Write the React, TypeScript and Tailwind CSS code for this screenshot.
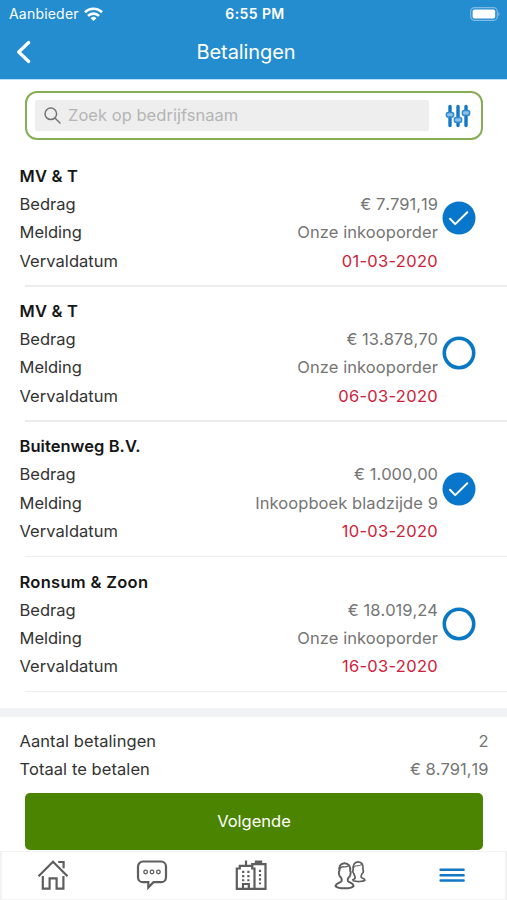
import React from "react";

type Payment = { name: string; amount: string; note: string; due: string; selected: boolean; nameSpacing: string };

const payments: Payment[] = [
  { name: "MV & T", amount: "€ 7.791,19", note: "Onze inkooporder", due: "01-03-2020", selected: true, nameSpacing: "tracking-[0.2px]" },
  { name: "MV & T", amount: "€ 13.878,70", note: "Onze inkooporder", due: "06-03-2020", selected: false, nameSpacing: "tracking-[0.2px]" },
  { name: "Buitenweg B.V.", amount: "€ 1.000,00", note: "Inkoopboek bladzijde 9", due: "10-03-2020", selected: true, nameSpacing: "tracking-[0.05px]" },
  { name: "Ronsum & Zoon", amount: "€ 18.019,24", note: "Onze inkooporder", due: "16-03-2020", selected: false, nameSpacing: "tracking-[0.3px]" },
];

function WifiIcon() {
  return (
    <svg className="h-[15px] w-[19px]" viewBox="0 0 19 15" fill="none" stroke="#fff" strokeWidth="2.7">
      <path d="M1 5.300a12 12 0 0 1 17 0" />
      <path d="M4 8.900a7.800 7.800 0 0 1 11 0" />
      <path d="M9.500 14 6.600 11.200a4.100 4.100 0 0 1 5.800 0Z" fill="#fff" stroke="none" />
    </svg>
  );
}

function BatteryIcon() {
  return (
    <svg className="h-[14px] w-[31px]" viewBox="0 0 31 14" fill="none">
      <rect x="0.7" y="0.7" width="26.600" height="12.600" rx="3.800" stroke="#7fbbe4" strokeWidth="1.200" />
      <rect x="2.600" y="2.600" width="22.600" height="8.800" rx="2" fill="#fff" />
      <path d="M28.400 5c1.600.5 1.600 3.500 0 4Z" fill="#7fbbe4" />
    </svg>
  );
}

function FilterIcon() {
  return (
    <svg className="h-6 w-[26px]" viewBox="0 0 26 24" fill="none" stroke="#1277c4">
      <path d="M5 2.500v19M13 2.500v19M21 2.500v19" strokeWidth="3.400" strokeLinecap="round" />
      <g fill="#8fc2e8" stroke="#2f8bd0" strokeWidth="1.500">
        <rect x="1.400" y="8.400" width="7.200" height="4.600" rx="1.800" />
        <rect x="9.400" y="13.600" width="7.200" height="4.600" rx="1.800" />
        <rect x="17.400" y="6.600" width="7.200" height="4.600" rx="1.800" />
      </g>
    </svg>
  );
}

function SelectMark({ selected }: { selected: boolean }) {
  return (
    <svg className="h-[34px] w-[34px]" viewBox="0 0 34 34" fill="none">
      {selected ? (
        <>
          <circle cx="17" cy="17" r="16.500" fill="#0877cb" />
          <path d="m8 17.800 5.200 5.300L25.300 11.300" stroke="#fff" strokeWidth="2" strokeLinecap="round" strokeLinejoin="round" />
        </>
      ) : (
        <circle cx="17" cy="17" r="14.700" stroke="#0877c4" strokeWidth="3.600" />
      )}
    </svg>
  );
}

function PaymentRow({ item }: { item: Payment }) {
  return (
    <li className="h-[135.2px] pt-[10.6px]">
      <div className="flex h-[124.6px] flex-col">
        <h2 className={`ml-[19.5px] text-[16.5px] font-semibold leading-[28px] text-[#161616] ${item.nameSpacing}`}>{item.name}</h2>
        <div className="flex pl-[19.5px]">
          <dl className="w-[418.5px] text-[16.5px] leading-[28.2px] text-[#333]">
            <div className="flex justify-between">
              <dt>Bedrag</dt>
              <dd className="text-[#757575] [font-kerning:none]">{item.amount}</dd>
            </div>
            <div className="flex justify-between">
              <dt>Melding</dt>
              <dd className="tracking-[0.07px] text-[#757575]">{item.note}</dd>
            </div>
            <div className="flex justify-between">
              <dt className="tracking-[0.05px]">Vervaldatum</dt>
              <dd className="tracking-[0.3px] text-[#d0213a]">{item.due}</dd>
            </div>
          </dl>
          <div className="ml-1 mt-[11.2px]">
            <SelectMark selected={item.selected} />
          </div>
        </div>
        <div className="ml-[25px] mt-auto h-[1.5px] bg-[#ececec]" />
      </div>
    </li>
  );
}

function HomeIcon() {
  return (
    <svg className="h-8 w-8" viewBox="0 0 32 32" fill="none" stroke="#5e5e5e" strokeWidth="2.200">
      <path d="M1.500 17.200 16 2.800l14.500 14.400" />
      <path d="M21.200 3H26.600V9.200" />
      <path d="M5.800 17v12.600h6.800V19.400h7v10.200h6.800V17" />
    </svg>
  );
}

function ChatIcon() {
  return (
    <svg className="h-8 w-8" viewBox="0 0 32 32" fill="none" stroke="#5e5e5e" strokeWidth="2.200">
      <path d="M7 2.500h18a5 5 0 0 1 5 5v10.700a5 5 0 0 1-5 5h-7.500l-5.200 5.300v-5.300H7a5 5 0 0 1-5-5V7.500a5 5 0 0 1 5-5Z" />
      <g strokeWidth="1.300">
        <circle cx="9.600" cy="13" r="1.800" />
        <circle cx="16" cy="13" r="1.800" />
        <circle cx="22.400" cy="13" r="1.800" />
      </g>
    </svg>
  );
}

function BuildingsIcon() {
  return (
    <svg className="h-8 w-8" viewBox="0 0 32 32" fill="none" stroke="#5e5e5e" strokeWidth="2.200">
      <path d="M1.800 29.800V9.500h3V6.800h12.400v2.700h2.300V29.800Z" />
      <path d="M11 6.500V1.500M17.200 7.500V5.200h13.300v24.600H19.500" />
      <path d="M19.800 3h7.400" strokeWidth="3" />
      <path d="M8 29.800v-4.800h5.800v4.800" />
      <path d="M8.200 11.800v10.500M13.400 11.800v10.500M25 10.800v14.500" strokeWidth="2.200" strokeDasharray="2.200 2" />
    </svg>
  );
}

function PeopleIcon() {
  return (
    <svg className="h-8 w-8" viewBox="0 0 32 32" fill="none" stroke="#5e5e5e" strokeLinejoin="round" strokeLinecap="round">
      <path
        strokeWidth="1.900"
        d="M1.500 27.200c.3-2.700 2.700-3.300 5-4.200 1.900-.7 1.500-2.700.3-4.800-.9-.3-1.500-1.200-1.600-2.600l-.4-2.200c0-.6.200-1 .6-1.200C4.800 7.200 6.500 4.200 10.500 4.200s6.300 3 5.700 8c.4.200.6.600.5 1.200l-.3 2.200c-.2 1.400-.8 2.300-1.700 2.600-1.200 2.100-1.600 4.100.3 4.800 2.300.9 4.300 1.500 4.600 4.200-3 2.800-15 2.800-18.100 0Z"
      />
      <path strokeWidth="1.300" d="M5.800 10.300c.8-2.300 2-2.700 3.700-2.500 2.200.3 3.900-.2 5-1" />
      <path
        strokeWidth="1.700"
        d="M18.800 20.800c2-.7 3-1.400 2-3.800-.4-.6-.8-1.300-.8-2.200-.9-.4-1.200-1.300-1.200-2.800 0-.5.100-.8.400-.9-.5-5 1-8.300 4.900-8.300s5.400 3.100 4.900 8.300c.4.200.5.500.4 1-.1 1.500-.6 2.400-1.400 2.700-.7 1.700-1.700 3.600.2 4.200 1.500.4 2.500 1.100 2.700 2.200-2.200 1.600-8 1.700-11.600.6"
      />
      <path strokeWidth="1.100" d="M20 8.300c1-1.800 2-1.700 3.500-1.600 1.600.1 3-.3 3.800-1" />
    </svg>
  );
}

function MenuIcon() {
  return (
    <svg className="h-8 w-8" viewBox="0 0 32 32" stroke="#1277c4" strokeWidth="2.500" strokeLinecap="round">
      <path d="M4.600 10.800h23M4.600 16.200h23M4.600 21.600h23" />
    </svg>
  );
}

export default function App() {
  return (
    <div className="flex h-[900px] w-[507px] flex-col overflow-hidden bg-white font-['Inter','Liberation_Sans',sans-serif] antialiased">
      <header className="h-20 shrink-0 border-b border-[#b5e2fa] bg-[#248dd0] text-white">
        <div className="grid h-7 grid-cols-3 items-center pl-[9px] pr-[6px]">
          <div className="flex items-center gap-[5px]">
            <span className="text-[14px] leading-5 tracking-[0.2px]">Aanbieder</span>
            <WifiIcon />
          </div>
          <span className="text-center text-[14px] font-semibold leading-5 tracking-[0.4px]">6:55 PM</span>
          <div className="flex justify-end">
            <BatteryIcon />
          </div>
        </div>
        <div className="grid h-12 grid-cols-[60px_1fr_75px] items-center">
          <svg className="ml-4 h-6 w-4" viewBox="0 0 16 24" fill="none" stroke="#fff" strokeWidth="3.200" strokeLinecap="round" strokeLinejoin="round">
            <path d="M12.700 2.500 2.700 12l10 9.500" />
          </svg>
          <h1 className="text-center text-[20px] leading-7 tracking-[-0.1px]">Betalingen</h1>
        </div>
      </header>

      <div className="ml-[25px] mt-[11px] flex h-[49px] w-[458px] shrink-0 items-center rounded-[12px] border-2 border-[#86ae54] pl-[8px]">
        <div className="flex h-[31px] w-[394px] items-center rounded-[2px] bg-[#eee] pl-[9px]">
          <svg className="mb-px h-[17px] w-[17px]" viewBox="0 0 17 17" fill="none" stroke="#757575" strokeWidth="1.500" strokeLinecap="round">
            <circle cx="6.800" cy="6.800" r="5.800" />
            <path d="m11.200 11.200 4.800 4.800" />
          </svg>
          <span className="mb-[2px] ml-[7px] text-[16.5px] leading-6 tracking-[0.03px] text-[#b5b5b5]">Zoek op bedrijfsnaam</span>
        </div>
        <div className="ml-[16px]">
          <FilterIcon />
        </div>
      </div>

      <ul className="mt-[11.500px] h-[556.500px] shrink-0">
        {payments.map((item) => (
          <PaymentRow key={item.due} item={item} />
        ))}
      </ul>

      <div className="h-[9px] shrink-0 bg-[#f1f2f4]" />

      <section className="h-[134px] shrink-0 pt-[9.500px]">
        <dl className="pl-[19.5px] pr-[18.5px] text-[16.5px] leading-[28.200px] text-[#333]">
          <div className="flex justify-between">
            <dt className="tracking-[0.07px]">Aantal betalingen</dt>
            <dd className="text-[#757575]">2</dd>
          </div>
          <div className="flex justify-between">
            <dt className="tracking-[0.07px]">Totaal te betalen</dt>
            <dd className="text-[#757575] [font-kerning:none]">€ 8.791,19</dd>
          </div>
        </dl>
        <button className="ml-[25px] mt-[10px] h-[57px] w-[458px] rounded-[5px] bg-[#4b8400] text-[16.5px] text-white">Volgende</button>
      </section>

      <nav className="grid h-[49px] shrink-0 grid-cols-[99px_99px_98.5px_102px_32px] items-start border-2 border-t-[1px] border-b-[1px] border-[#f3f3f3] pl-[35px] pt-[7px]">
        <HomeIcon />
        <ChatIcon />
        <BuildingsIcon />
        <PeopleIcon />
        <MenuIcon />
      </nav>
    </div>
  );
}
